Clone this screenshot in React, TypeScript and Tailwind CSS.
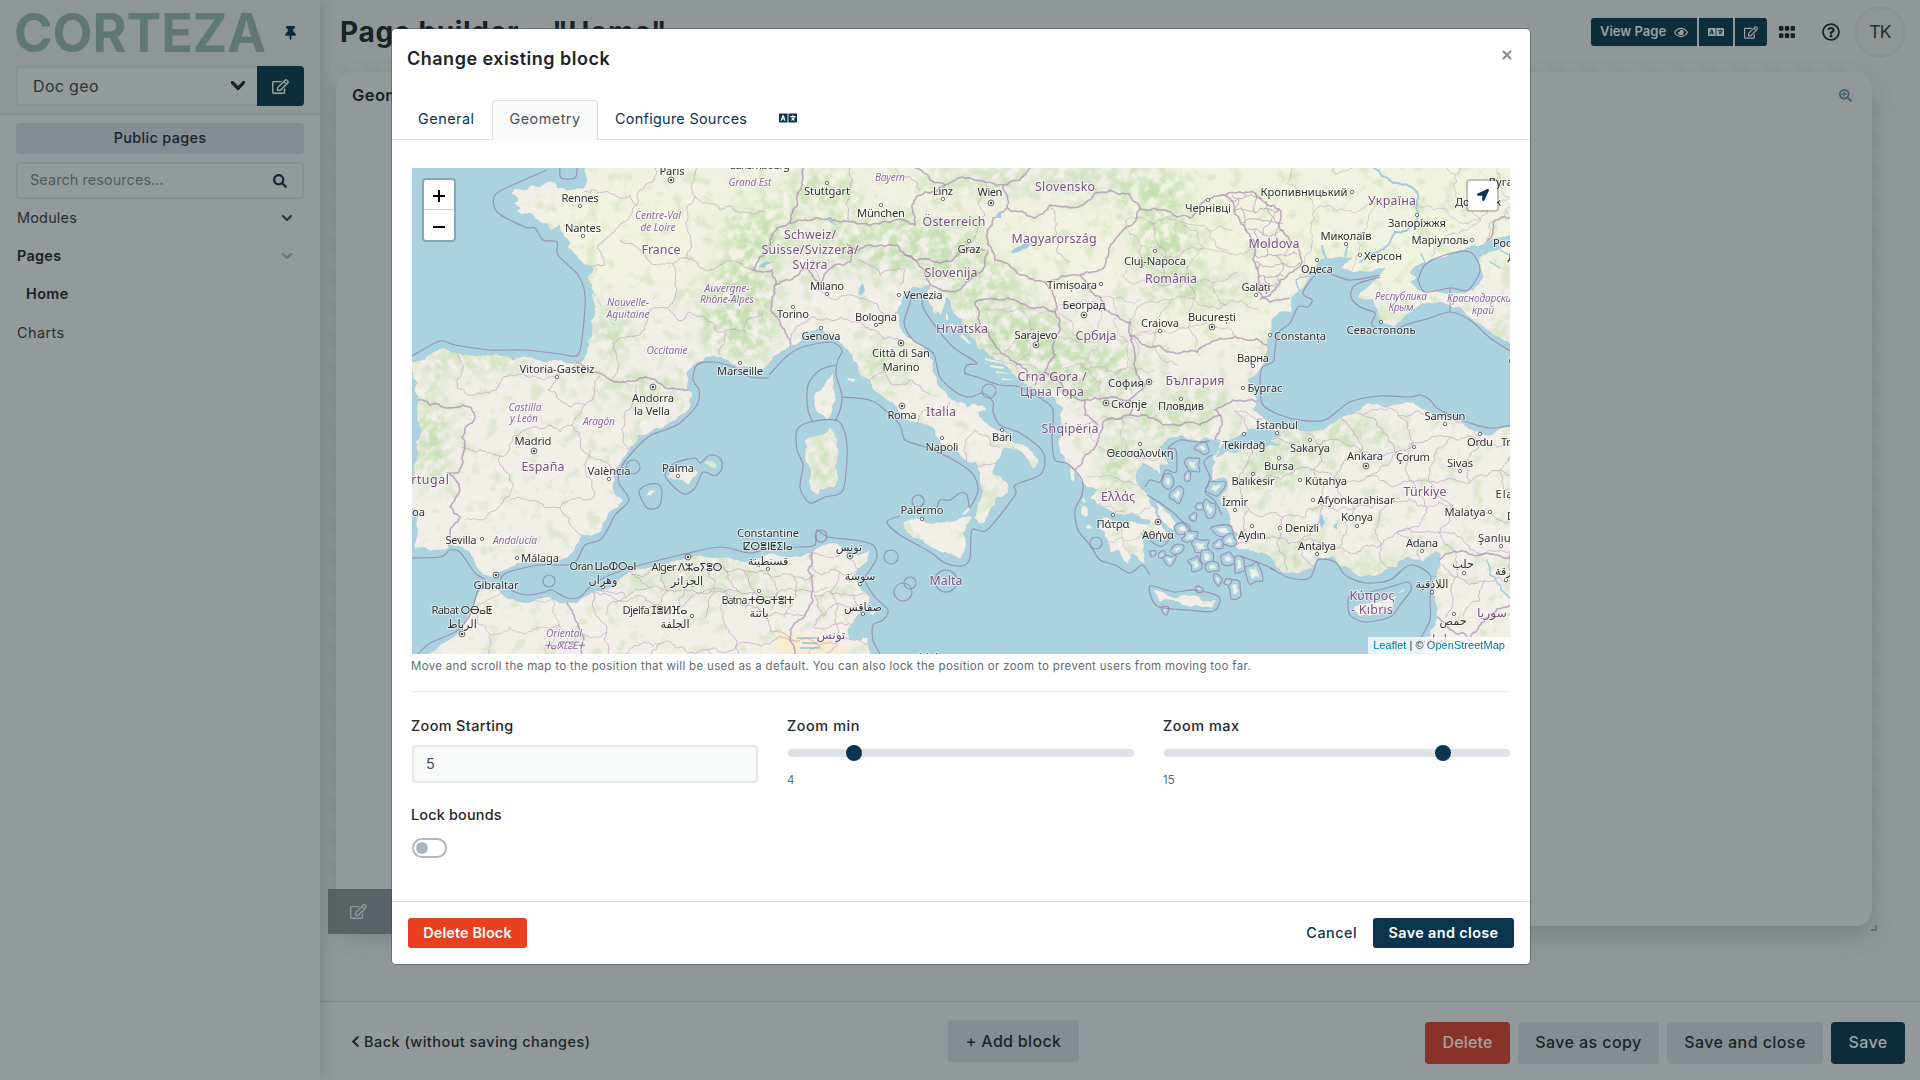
import {
  FaChevronDown,
  FaChevronLeft,
  FaLanguage,
  FaLocationArrow,
  FaRegEdit,
  FaRegEye,
  FaRegQuestionCircle,
  FaSearch,
  FaSearchPlus,
  FaThumbtack,
} from "react-icons/fa";

type Pt = [number, number];

/* ---------- geometry helpers ---------- */

function makeRng(seed: number) {
  let s = seed;
  return () => {
    s = (s * 1664525 + 1013904223) % 4294967296;
    return s / 4294967296;
  };
}

function parse(points: string): Pt[] {
  return points
    .trim()
    .split(/\s+/)
    .map((p) => p.split(",").map(Number) as unknown as Pt);
}

/** Adds midpoint displacement to a polyline so it reads as a natural coast or border. */
function rough(points: string, closed = false, amp = 0.16, seed = 7): string {
  const rng = makeRng(seed);
  const src = parse(points);
  if (closed) src.push(src[0]);
  const out: Pt[] = [src[0]];
  const split = (a: Pt, b: Pt) => {
    const dx = b[0] - a[0];
    const dy = b[1] - a[1];
    const len = Math.hypot(dx, dy);
    if (len < 2.6 || len > 75) {
      out.push(b);
      return;
    }
    const k = (rng() - 0.5) * 2 * amp;
    const m: Pt = [(a[0] + b[0]) / 2 - dy * k, (a[1] + b[1]) / 2 + dx * k];
    split(a, m);
    split(m, b);
  };
  for (let i = 1; i < src.length; i++) split(src[i - 1], src[i]);
  return "M" + out.map((p) => `${p[0].toFixed(1)},${p[1].toFixed(1)}`).join("L") + (closed ? "Z" : "");
}

/** Smooth line through the points, used for maritime limits. */
function smooth(points: string, closed = false): string {
  const p = parse(points);
  const n = p.length;
  const at = (i: number) => (closed ? p[(i + n) % n] : p[Math.max(0, Math.min(n - 1, i))]);
  let d = `M${p[0][0]},${p[0][1]}`;
  const last = closed ? n : n - 1;
  for (let i = 0; i < last; i++) {
    const a = at(i - 1);
    const b = at(i);
    const c = at(i + 1);
    const e = at(i + 2);
    d += `C${(b[0] + (c[0] - a[0]) / 7).toFixed(1)},${(b[1] + (c[1] - a[1]) / 7).toFixed(1)} ${(c[0] - (e[0] - b[0]) / 7).toFixed(1)},${(c[1] - (e[1] - b[1]) / 7).toFixed(1)} ${c[0]},${c[1]}`;
  }
  return d + (closed ? "Z" : "");
}

/** Irregular province mesh inside a box. */
function mesh(x0: number, y0: number, x1: number, y1: number, cell: number, seed: number): string {
  const rng = makeRng(seed);
  const cols = Math.ceil((x1 - x0) / cell);
  const rows = Math.ceil((y1 - y0) / cell);
  const g: Pt[][] = [];
  for (let r = 0; r <= rows; r++) {
    g.push([]);
    for (let c = 0; c <= cols; c++) {
      g[r].push([
        x0 + c * cell + (r % 2) * cell * 0.5 + (rng() - 0.5) * cell * 0.6,
        y0 + r * cell + (rng() - 0.5) * cell * 0.6,
      ]);
    }
  }
  let d = "";
  const seg = (a: Pt, b: Pt) => {
    d += rough(`${a[0]},${a[1]} ${b[0]},${b[1]}`, false, 0.22, Math.floor(rng() * 9999));
  };
  for (let r = 0; r < rows; r++) {
    for (let c = 0; c < cols; c++) {
      seg(g[r][c], g[r][c + 1]);
      if (rng() > 0.25) seg(g[r][c], g[r + 1][c]);
    }
  }
  return d;
}

function ring(x: number, y: number, rx: number, ry: number, seed: number, amp = 0.3): string {
  const rng = makeRng(seed);
  const pts: string[] = [];
  for (let i = 0; i < 9; i++) {
    const a = (i / 9) * Math.PI * 2;
    const k = 1 + (rng() - 0.5) * 2 * amp;
    pts.push(`${(x + Math.cos(a) * rx * k).toFixed(1)},${(y + Math.sin(a) * ry * k).toFixed(1)}`);
  }
  return smooth(pts.join(" "), true);
}

/* ---------- map data ---------- */

const europe =
  "582,160 584,188 570,190 557,188 554,182 547,182 543,185 533,185 526,190 515,188 510,193 518,200 512,203 520,208 516,212 522,215 533,215 540,222 547,223 552,230 560,225 563,233 570,242 568,247 572,250 580,260 593,268 588,276 592,285 602,307 597,296 592,293 591,320 587,350 583,360 577,362 570,363 557,360 543,362 530,357 513,360 490,355 470,355 457,353 448,350 443,348 433,352 425,360 413,362 405,366 405,370 413,373 417,383 415,393 417,410 421,430 418,453 413,477 405,492 408,505 417,510 417,533 414,548 423,547 437,550 450,546 460,547 468,551 472,557 475,565 483,575 493,578 500,572 517,563 533,563 553,562 567,558 572,553 580,538 592,536 600,533 603,523 612,510 623,500 613,488 613,473 622,460 630,447 637,442 638,435 653,430 667,425 678,417 690,407 692,393 687,388 687,372 697,363 707,357 713,356 727,360 733,365 750,367 760,370 769,363 780,353 790,347 802,340 807,332 820,328 837,338 848,350 853,360 858,373 870,380 873,390 887,400 903,417 917,423 927,425 935,430 940,443 953,450 967,462 975,462 980,473 983,490 977,507 974,518 978,523 985,522 992,507 997,497 1008,493 1007,482 1000,476 993,473 995,466 997,460 1005,448 1017,450 1028,460 1035,469 1039,460 1033,452 1017,443 1002,430 983,420 978,412 987,410 983,405 967,407 953,400 937,383 933,360 920,343 907,337 900,327 898,310 903,297 913,287 930,285 928,300 935,315 940,310 947,297 957,317 970,337 990,357 1010,370 1030,387 1053,397 1063,408 1060,413 1058,443 1060,453 1073,470 1080,480 1097,490 1090,497 1098,507 1113,513 1140,517 1140,521 1103,517 1098,527 1107,540 1110,553 1118,550 1128,565 1132,553 1138,560 1145,563 1143,550 1140,533 1153,537 1167,540 1165,530 1157,517 1150,503 1140,487 1137,473 1143,463 1152,468 1160,475 1160,465 1172,468 1167,460 1160,447 1173,437 1190,440 1207,438 1220,440 1212,457 1215,462 1212,480 1227,480 1220,497 1227,510 1230,523 1237,533 1237,550 1257,553 1273,560 1283,573 1300,573 1312,567 1317,557 1333,557 1347,567 1360,577 1380,575 1397,567 1407,557 1423,562 1440,553 1437,570 1432,583 1435,597 1437,617 1430,630 1420,660 1520,660 1520,160";

const africa =
  "405,665 427,654 443,643 462,630 472,610 480,590 497,587 507,598 530,602 550,597 560,603 577,603 593,592 613,587 627,573 650,567 677,560 700,555 727,557 747,562 770,553 790,557 810,553 823,545 837,543 847,553 858,555 870,550 868,560 858,570 853,577 860,587 870,597 867,607 853,623 848,630 850,640 867,640 873,665";

const islands = [
  "832,373 833,387 832,413 827,420 818,413 814,402 815,393 823,387",
  "805,440 820,435 830,427 838,440 838,457 835,487 820,490 818,495 810,490 810,470 805,453",
  "903,523 917,518 937,522 957,520 972,517 963,533 965,550 960,559 943,553 923,540 907,533",
  "1152,590 1173,597 1193,595 1217,600 1212,608 1190,607 1160,602",
  "1353,607 1367,603 1387,598 1405,588 1393,602 1392,610 1373,615 1360,617",
  "667,477 675,470 683,466 698,473 690,485 682,480",
  "704,462 710,461 717,466 714,469",
  "646,496 650,490 655,491 651,496",
  "1152,500 1165,510 1180,528 1172,530 1160,518",
];

const archipelago: [number, number, number, number][] = [
  [1192, 465, 6, 6], [1202, 447, 5, 4], [1215, 488, 9, 6], [1210, 510, 5, 8], [1177, 495, 5, 5],
  [1168, 482, 5, 5], [1187, 477, 2, 3], [1200, 507, 2, 2], [1193, 517, 2, 2], [1182, 529, 8, 4],
  [1190, 537, 6, 4], [1223, 530, 9, 4], [1200, 546, 7, 5], [1178, 549, 5, 4], [1170, 560, 4, 3],
  [1153, 553, 1.5, 1.5], [1162, 555, 1.5, 1.5], [1207, 557, 6, 4], [1196, 564, 5, 5], [1213, 567, 5, 3],
  [1228, 558, 6, 4], [1239, 564, 4, 6], [1255, 572, 6, 9], [1235, 588, 4, 7], [1218, 580, 3, 4],
  [1228, 582, 2, 2], [1200, 590, 2, 2], [1165, 610, 2, 3], [1230, 541, 6, 4], [1218, 545, 4, 3],
];

/* Ionian islands: no maritime ring of their own */
const ionian: [number, number, number, number][] = [
  [1085, 512, 4, 6], [1089, 527, 4, 3], [1072, 474, 3, 7], [1084, 500, 2, 3],
];

const blackSea =
  "1277,427 1263,417 1253,410 1257,403 1253,387 1248,380 1257,373 1265,360 1268,340 1272,320 1280,312 1292,313 1292,297 1307,283 1317,263 1325,258 1340,257 1352,258 1345,263 1340,268 1367,272 1385,268 1375,280 1360,292 1357,297 1373,300 1380,323 1393,327 1413,310 1440,302 1455,308 1460,307 1473,320 1487,330 1520,345 1520,425 1510,427 1490,435 1473,430 1460,420 1440,417 1427,410 1413,402 1387,407 1367,403 1353,413 1337,420 1323,430 1300,430";
const azov =
  "1417,277 1410,272 1423,263 1440,258 1457,252 1475,246 1487,242 1520,228 1520,245 1497,250 1480,257 1483,277 1473,290 1457,293 1440,292 1423,292 1410,282";
const marmara = "1222,446 1235,438 1243,433 1258,428 1275,432 1281,436 1270,440 1280,445 1262,447 1250,445 1238,452 1228,450 1216,457";

const lakes = [
  "1010,252 1020,246 1035,240 1028,247 1014,253",
  "824,217 832,221 838,225 833,224",
  "858,294 862,283 865,290 861,295",
  "758,267 766,261 772,262 764,268",
  "1318,522 1322,514 1325,522 1321,528",
  "1333,527 1338,522 1337,530",
  "996,217 1000,211 1001,218",
];

const borders = [
  "577,362 590,372 610,380 633,381 650,378 665,388 690,390",
  "405,407 423,400 430,405 447,408 463,405 470,407 475,417 472,423 462,437 462,457 458,473 448,473 460,490 450,507 460,517 450,533 449,546",
  "803,168 800,190 790,223 777,228 770,245 753,270 772,270 775,293 772,313 790,340 790,353",
  "790,223 810,220 830,218 850,222 870,225 895,220 915,225 912,205 925,192 945,185 958,178 985,182 1003,185 1007,208 993,218 988,245",
  "775,285 790,280 805,268 820,285 835,265 850,262 848,245 858,250 880,245 897,245 905,255 930,260 955,257 985,250",
  "1007,208 1035,218 1050,205 1090,200 1110,190 1130,195 1140,208 1165,210 1190,218 1200,205 1225,195",
  "1003,185 1020,180 1030,168",
  "915,168 930,180 945,185",
  "1140,208 1115,240 1105,265 1080,275 1045,282 1020,275 995,260 988,245",
  "905,255 925,270 930,285 955,292 970,280 985,262 988,250",
  "975,302 1000,300 1030,308 1055,312 1060,330 1055,355 1045,372 1035,385",
  "975,302 980,325 1010,360 1030,378",
  "1045,282 1055,300 1055,312",
  "1080,275 1090,290 1105,310 1130,322 1130,335 1145,345 1197,352 1220,338 1240,338 1270,348",
  "1130,335 1135,360 1145,385 1130,400 1130,415 1160,422 1200,425 1220,415 1215,410 1240,400 1258,402",
  "1130,415 1105,420 1098,440 1085,455 1075,470",
  "1045,372 1062,385 1085,400 1085,415 1098,425",
  "1085,400 1105,398 1130,400",
  "1220,415 1222,425 1215,440",
  "1225,195 1240,220 1255,250 1258,292 1270,302 1290,298",
  "1225,195 1255,193 1280,210 1285,235 1302,262 1280,280 1275,290 1260,300",
  "1520,213 1495,220 1487,242",
  "1437,562 1450,553 1480,555 1520,558",
  "1437,617 1450,630 1470,640 1520,600",
  "567,602 575,620 582,654",
  "813,548 808,570 808,610 790,630 795,654",
];

const provinces = [
  "584,192 605,192 630,195 637,205 623,222 605,240 598,245 605,265 590,266",
  "620,240 640,250 650,262 673,264 687,258 690,235 688,205 695,196 720,210 745,212 765,212",
  "637,205 640,190 652,182 655,168",
  "695,196 697,168",
  "687,258 705,270 712,270 725,262 745,268 753,268",
  "673,264 675,285 668,308 650,310 640,335 613,343 617,360 612,378",
  "668,310 678,320 690,312 705,318 715,330 725,332 720,355",
  "725,330 745,332 750,318 765,310",
  "457,353 462,370 457,388 475,395 500,383 540,378 560,372 577,362",
  "560,372 548,390 560,400 585,405 600,375",
  "585,405 575,418 572,425 580,445 600,460 612,470",
  "637,385 632,405 625,420 622,430 628,450",
  "462,447 475,452 500,456 500,465 510,475 510,495 490,512 465,520",
  "500,456 530,428 548,425 560,432 572,425",
  "510,500 545,508 560,508 575,530 583,535",
  "560,508 570,500 590,500 592,482 585,470 590,450",
  "812,260 818,290 835,300 860,298 880,312 898,312",
  "790,340 800,325 830,320 870,330 900,340",
  "858,260 880,275 905,270 900,285",
  "870,380 885,372 895,385 910,380 930,395",
  "917,423 925,410 940,412 950,402",
  "967,462 965,440 975,430 985,435 1000,448",
  "977,467 990,465 997,462",
  "850,168 850,195 848,222",
  "895,168 920,190",
  "985,182 978,205 985,215 975,240 955,257",
  "1050,205 1055,230 1070,262",
];

const maritime = [
  "547,170 515,184 495,195 497,212 525,227 535,228 543,240 557,242 558,255 578,275 585,295 583,330 578,355 560,354 525,350 490,350 455,345 440,341 412,356",
  "560,168 561,178 575,178 577,168",
  "769,378 750,377 733,367 713,362 697,365 693,380 699,390 697,405 680,423 665,430 648,437 630,455 620,470 619,483 629,500 615,515 609,527 600,540 585,545 577,560 567,565 540,565 515,570 503,575 502,582 515,592 530,595 545,592 552,590 567,598 580,597 592,585 610,575 640,565 680,555 720,547 750,553 770,548 800,547 815,545 817,530 828,537 855,540 873,545 877,557 870,570 865,580 875,597 888,610 883,620 873,625 873,640 880,654",
  "405,558 440,557 450,550 460,552 475,573 485,580 478,590 470,615 455,632 430,643 418,654",
  "769,375 785,358 800,348 830,342 842,350 838,360 836,375 842,395 840,410 835,421",
  "836,365 820,370 808,385 808,410 813,422",
  "842,397 870,400 885,410 900,425 905,440 925,447 950,458 972,473 978,490 970,507 967,495 960,493 950,500 940,500 937,508",
  "900,516 887,522 900,535 930,552 945,563 962,566 970,558 972,530 987,530 1015,495 1015,485 1040,475 1045,460 1040,448 1020,433 1000,425 993,412 993,402 983,393 970,397 957,393 940,377 933,353 913,340 904,323 910,303 910,290",
  "922,292 923,307 933,323 953,347 977,363 967,365 965,373 977,377 1000,385 1020,387 1043,400 1053,410 1052,440 1055,460 1068,464 1082,480 1082,495 1075,510 1078,530 1090,545 1100,560 1115,565 1130,573 1142,565 1150,575",
  "1380,275 1350,280 1320,272 1303,293 1312,300 1308,307 1298,307 1290,323 1278,333 1275,350 1273,362 1262,368 1260,390 1263,405 1280,415 1300,420 1325,420 1350,402 1380,396 1410,397 1420,395 1430,400 1437,408 1450,415 1470,423 1490,428 1512,425",
  "1380,277 1355,285 1351,297 1360,307 1375,313 1372,325 1390,332 1405,325 1430,318 1450,312 1470,320 1490,338 1512,352",
  "1418,280 1425,265 1445,255 1470,252 1480,270 1468,290 1450,288 1425,292 1418,280",
  "1450,288 1450,312",
  "1270,568 1290,578 1310,578 1318,560 1335,562 1345,575 1365,583 1390,580 1410,565 1430,575 1430,600 1430,620 1420,640 1418,654",
  "1145,487 1150,480 1160,482 1166,470 1176,472 1176,450 1168,448 1180,440 1196,442 1210,441",
  "1212,455 1204,462 1210,478 1205,492 1214,500 1222,515",
  "1147,495 1160,503 1176,515 1190,530",
  "1240,556 1262,564 1275,570",
  "1143,530 1152,542 1163,546 1172,535",
];
const maritimeRings = [
  "665,475 675,463 695,458 700,463 710,455 720,458 722,468 715,476 703,472 695,488 685,494 675,488",
  "797,430 810,422 838,421 847,445 843,490 825,497 810,503 800,488 803,465 797,450",
  "1348,600 1350,615 1365,622 1390,617 1400,605 1411,590 1408,582 1390,587 1370,592 1352,595",
  "1150,586 1174,592 1195,590 1219,597 1214,611 1188,610 1157,606",
  "639,492 647,485 658,484 662,492 660,505 654,509 646,507",
];
const maritimeCircles: [number, number, number][] = [
  [633, 467, 7], [549, 581, 6], [989, 391, 7], [918, 501, 6], [891, 557, 7],
  [910, 583, 6], [903, 592, 9], [1096, 543, 6], [946, 581, 11], [821, 536, 6],
];

/* [text, centre x, baseline, width (0 = natural)] */
type Label = [string, number, number, number];

const cities: Label[] = [
  ["Paris", 672, 174.5, 25], ["Rennes", 580, 202, 37], ["Nantes", 583, 232, 36], ["Vitoria-Gasteiz", 557, 373, 75],
  ["Marseille", 740, 375, 46], ["Andorra", 653, 402, 42], ["la Vella", 652, 415, 36], ["Madrid", 533, 445, 37],
  ["València", 609, 475, 43], ["Lisboa", 408, 516, 34], ["Sevilla", 461, 544, 31], ["Málaga", 540, 562, 38],
  ["Gibraltar", 496, 589, 45], ["Palma", 678, 472, 32], ["Oran ⵡⴰⵀⵔⴰⵏ", 603, 570, 67], ["وهران", 603, 584, 0],
  ["Alger ⴷⵣⴰⵢⴻⵔ", 687, 571, 71], ["الجزائر", 687, 585, 0], ["Rabat ⵔⴱⴰⵟ", 462, 614, 61], ["الرباط", 462, 628, 0],
  ["Djelfa ⵊⴻⵍⴼⴰ", 655, 614, 65], ["الجلفة", 675, 628, 0], ["Constantine", 768, 537, 62], ["ⵇⵙⴻⵏⵟⵉⵏⴰ", 768, 550, 50],
  ["قسنطينة", 768, 565, 0], ["Batna ⵜⴱⴰⵜⴻⵏⵜ", 758, 604, 73], ["باتنة", 759, 617, 0], ["Stuttgart", 827, 195, 46],
  ["Linz", 943, 195, 20], ["Wien", 990, 196, 25], ["München", 881, 217, 48], ["Graz", 969, 253, 23],
  ["Cluj-Napoca", 1155, 265, 62], ["Milano", 827, 290, 34], ["Timișoara", 1072, 289, 50], ["Venezia", 923, 299, 39],
  ["Београд", 1084, 309, 43], ["Torino", 793, 318, 32], ["Bologna", 876, 321, 42], ["Genova", 821, 340, 39],
  ["Sarajevo", 1036, 339, 43], ["Città di San", 901, 357, 58], ["Marino", 901, 371, 37], ["София", 1126, 387, 36],
  ["Скопје", 1129, 408, 36], ["Roma", 902, 419, 29], ["Bari", 1002, 441, 20], ["Napoli", 942, 451, 33],
  ["Θεσσαλονίκη", 1140, 457, 67], ["Πάτρα", 1113, 528, 33], ["Palermo", 922, 514, 43], ["تونس", 849, 551, 0],
  ["سوسة", 860, 580, 0], ["صفاقس", 863, 611, 0], ["طرابلس", 924, 662, 0], ["Кропивницький", 1304, 196, 87],
  ["Чернівці", 1208, 212, 46], ["Донецьк", 1478, 206, 46], ["Луганськ", 1513, 186, 50], ["Запоріжжя", 1417, 227, 58],
  ["Миколаїв", 1346, 240, 51], ["Маріуполь", 1440, 244, 57], ["Херсон", 1383, 260, 38], ["Ростов-на-", 1521, 247, 56],
  ["Дону", 1521, 261, 27], ["Одеса", 1317, 273, 32], ["Galați", 1256, 291, 29], ["București", 1212, 321, 48],
  ["Craiova", 1160, 327, 38], ["Севастополь", 1381, 334, 69], ["Constanța", 1300, 340, 52], ["Варна", 1253, 362, 32],
  ["Сочи", 1522, 365, 27], ["Бургас", 1265, 392, 35], ["Пловдив", 1181, 410, 46], ["Samsun", 1445, 420, 41],
  ["İstanbul", 1277, 429, 42], ["Tekirdağ", 1244, 449, 43], ["Sakarya", 1310, 452, 40], ["Ankara", 1365, 460, 36],
  ["Çorum", 1413, 461, 34], ["Ordu", 1480, 446, 26], ["Trabzon", 1521, 446, 40], ["Sivas", 1460, 467, 26],
  ["Bursa", 1279, 470, 30], ["Balıkesir", 1253, 485, 43], ["Kütahya", 1326, 485, 42], ["İzmir", 1235, 506, 26],
  ["Afyonkarahisar", 1356, 504, 77], ["Elazığ", 1513, 498, 35], ["Konya", 1357, 521, 32], ["Malatya", 1465, 516, 41],
  ["Diyarbakır", 1534, 520, 54], ["Aydın", 1252, 539, 28], ["Denizli", 1302, 532, 34], ["Antalya", 1317, 550, 38],
  ["Adana", 1422, 547, 32], ["Şanlıurfa", 1502, 542, 48], ["Αθήνα", 1158, 539, 32], ["حلب", 1463, 568, 0],
  ["اللاذقية", 1432, 588, 0], ["الرقة", 1507, 575, 0], ["حمص", 1453, 625, 0], ["Luxembourg", 760, 169, 60],
];

const countries: Label[] = [
  ["France", 661, 253.5, 39], ["España", 543, 471, 43], ["Portugal", 422, 484, 54], ["Slovensko", 1065, 191, 60],
  ["Österreich", 954, 226, 63], ["Schweiz/", 810, 239, 52], ["Suisse/Svizzera/", 810, 254, 97], ["Svizra", 810, 269, 35],
  ["Magyarország", 1054, 243, 85], ["Slovenija", 951, 277, 53], ["Hrvatska", 962, 333, 52], ["Србија", 1096, 340, 41],
  ["Crna Gora /", 1052, 381, 69], ["Црна Гора", 1052, 396, 64], ["Italia", 941, 416, 30], ["Shqipëria", 1070, 433, 57],
  ["Ελλάς", 1118, 501, 34], ["Malta", 946, 585, 33], ["تونس", 831, 639, 0], ["Україна", 1392, 205, 48],
  ["Moldova", 1274, 248, 51], ["România", 1171, 283, 52], ["България", 1195, 385, 59], ["Türkiye", 1425, 496, 43],
  ["Κύπρος", 1372, 600, 45], ["- Kıbrıs", 1372, 614, 42], ["سوريا", 1492, 617, 0], ["لبنان", 1435, 643, 0],
];

const regions: Label[] = [
  ["Grand Est", 750, 186, 43], ["Centre-Val", 658, 219, 46], ["de Loire", 658, 231, 35], ["Auvergne-", 727, 292, 45],
  ["Rhône-Alpes", 727, 303, 54], ["Nouvelle-", 628, 306, 42], ["Aquitaine", 628, 318, 43], ["Occitanie", 667, 354, 41],
  ["Castilla", 525, 411, 33], ["y León", 524, 422, 28], ["Aragón", 599, 425, 32], ["Andalucía", 515, 544, 44],
  ["Oriental", 564, 637, 36], ["ⵜⴰⵏⴳⵎⵓⴹⵜ", 564, 649, 41], ["Bayern", 890, 181, 30], ["Республика", 1401, 300, 52],
  ["Крым", 1401, 311, 25], ["Краснодарский", 1482, 302, 70], ["край", 1483, 314, 22],
];

const towns: Pt[] = [
  [580, 206], [583, 236], [557, 377], [740, 363], [609, 479], [482, 539], [517, 558], [678, 476], [603, 587],
  [692, 616], [768, 569], [759, 591], [827, 183], [943, 199], [881, 205], [969, 241], [1155, 251], [827, 294],
  [1101, 284], [899, 295], [793, 307], [876, 325], [821, 328], [1002, 430], [942, 438], [1140, 444], [1113, 515],
  [922, 519], [860, 584], [863, 614], [1352, 192], [1208, 200], [1417, 215], [1346, 244], [1472, 240], [1360, 255],
  [1317, 260], [1256, 295], [1160, 331], [1381, 322], [1270, 335], [1253, 366], [1243, 388], [1181, 399],
  [1445, 424], [1277, 433], [1244, 434], [1310, 440], [1414, 447], [1480, 434], [1460, 471], [1279, 458],
  [1253, 474], [1300, 480], [1235, 510], [1313, 500], [1357, 526], [1490, 512], [1252, 526], [1280, 528],
  [1317, 554], [1422, 551], [1501, 546], [1464, 573], [1432, 592], [1506, 580], [1454, 614],
];

const capitals: Pt[] = [
  [671, 180], [653, 387], [534, 451], [496, 575], [688, 557], [462, 634], [991, 203], [1084, 315], [1036, 345],
  [901, 343], [1149, 382], [1106, 403], [902, 406], [850, 556], [1212, 327], [1366, 466], [1158, 522],
];

/* Blurred patches of woodland: cx, cy, rx, ry */
const woods: [number, number, number, number][] = [
  [900, 245, 90, 28], [1010, 335, 60, 28], [1085, 370, 60, 30], [1165, 240, 30, 50], [1200, 290, 45, 16],
  [740, 310, 40, 55], [610, 335, 20, 25], [640, 388, 50, 12], [470, 360, 70, 12], [880, 365, 28, 18],
  [825, 460, 14, 34], [1330, 435, 70, 14], [1290, 555, 40, 12], [1370, 570, 40, 10], [980, 285, 50, 20],
  [1085, 180, 50, 14], [760, 235, 40, 30], [1120, 470, 20, 30], [1160, 425, 60, 12], [820, 190, 40, 20],
  [430, 440, 20, 50], [700, 582, 90, 10], [1190, 400, 50, 10], [1270, 470, 40, 20],
  [990, 500, 10, 20], [1370, 318, 40, 8], [1500, 335, 25, 10], [975, 180, 60, 12], [1150, 190, 40, 20],
];

function MapLabels({ items, kind }: { items: Label[]; kind: "city" | "country" | "region" }) {
  const cls =
    kind === "city"
      ? "fill-[#303030] text-[11.2px]"
      : kind === "country"
        ? "fill-[#77507f] text-[12.4px]"
        : "fill-[#8d6a9c] text-[10.2px] italic";
  return (
    <g
      className={cls}
      fontFamily='"Noto Sans", "DejaVu Sans", sans-serif'
      textAnchor="middle"
      stroke="#ffffff"
      strokeOpacity={0.6}
      strokeWidth={2}
      strokeLinejoin="round"
      paintOrder="stroke"
    >
      {items.map(([t, x, y, w], i) => (
        <text key={i} x={x} y={y} textLength={w > 0 ? w : undefined}>
          {t}
        </text>
      ))}
    </g>
  );
}

function GeoMap() {
  const landPaths = [
    rough(europe, true, 0.17, 11),
    rough(africa, true, 0.08, 5),
    ...islands.map((p, i) => rough(p, true, 0.15, 31 + i)),
  ];
  return (
    <svg viewBox="412 168 1098 486" className="block h-[486px] w-[1098px] bg-[#aad3df]">
      <defs>
        <clipPath id="land">
          {landPaths.map((d, i) => (
            <path key={i} d={d} />
          ))}
        </clipPath>
        <filter id="scrub" x="0" y="0" width="100%" height="100%" colorInterpolationFilters="sRGB">
          <feTurbulence type="fractalNoise" baseFrequency="0.07" numOctaves={5} seed={4} />
          <feColorMatrix values="0 0 0 0 0.80  0 0 0 0 0.88  0 0 0 0 0.71  5 0 0 0 -2.75" />
        </filter>
        <filter id="forest" x="0" y="0" width="100%" height="100%" colorInterpolationFilters="sRGB">
          <feTurbulence type="fractalNoise" baseFrequency="0.1" numOctaves={4} seed={9} />
          <feColorMatrix values="0 0 0 0 0.74  0 0 0 0 0.86  0 0 0 0 0.66  3.4 0 0 0 -1.15" />
        </filter>
        <filter id="soft">
          <feGaussianBlur stdDeviation="12" />
        </filter>
        <mask id="woods">
          <g filter="url(#soft)" fill="#ffffff">
            {woods.map(([cx, cy, rx, ry], i) => (
              <ellipse key={i} cx={cx} cy={cy} rx={rx} ry={ry} />
            ))}
          </g>
        </mask>
        <clipPath id="moldova">
          <path d="M1225,195L1255,193L1280,210L1285,235L1302,262L1280,280L1275,290L1258,292L1255,250L1240,220Z" />
        </clipPath>
      </defs>

      {landPaths.map((d, i) => (
        <path key={i} d={d} fill="#f2efe9" stroke="#a9bfd0" strokeWidth={0.5} />
      ))}

      <g clipPath="url(#land)">
        <g filter="url(#soft)" fill="#f1f3df">
          <ellipse cx={1350} cy={210} rx={230} ry={80} opacity={0.9} />
          <ellipse cx={1060} cy={245} rx={90} ry={50} opacity={0.8} />
          <ellipse cx={660} cy={230} rx={120} ry={70} opacity={0.8} />
          <ellipse cx={1210} cy={320} rx={80} ry={30} opacity={0.8} />
          <ellipse cx={860} cy={200} rx={140} ry={40} opacity={0.6} />
        </g>
        <rect x={412} y={168} width={1098} height={486} filter="url(#scrub)" opacity={0.5} />
        <g mask="url(#woods)">
          <rect x={412} y={168} width={1098} height={486} filter="url(#forest)" opacity={0.8} />
        </g>
        <path d="M775,632L800,634L838,642L850,654L775,654Z" fill="#f8ecd0" />
        <path d="M797,638h20M802,643h16M800,648h20" stroke="#8fc6de" strokeWidth={1.4} />
        <g fill="none" stroke="#b292b8" strokeOpacity={0.7} strokeWidth={0.8}>
          {provinces.map((p, i) => (
            <path key={i} d={rough(p, false, 0.2, 50 + i)} />
          ))}
          <path d={mesh(1240, 410, 1520, 590, 33, 3)} />
          <path d={mesh(1130, 225, 1235, 335, 27, 21)} opacity={0.8} />
          <path d={mesh(1290, 160, 1520, 245, 52, 8)} opacity={0.8} />
          <path d={mesh(590, 570, 790, 600, 22, 15)} />
          <path d={mesh(600, 605, 790, 680, 42, 19)} />
          <path d={mesh(812, 552, 870, 650, 19, 6)} />
          <path d={mesh(1090, 425, 1140, 560, 28, 13)} opacity={0.7} />
          <path d={mesh(480, 600, 570, 660, 34, 17)} opacity={0.8} />
          <path d={mesh(990, 305, 1125, 400, 32, 27)} opacity={0.7} />
        </g>
        <g fill="none" stroke="#b292b8" strokeOpacity={0.8} strokeWidth={0.9} clipPath="url(#moldova)">
          <path d={mesh(1220, 188, 1310, 300, 11, 2)} />
        </g>
        <g fill="none" stroke="#a98bb0" strokeOpacity={0.7} strokeWidth={1.6}>
          {borders.map((p, i) => (
            <path key={i} d={rough(p, false, 0.16, 90 + i)} />
          ))}
        </g>
        <g fill="none" stroke="#9fcbe0" strokeLinecap="round">
          <path d={rough("1363,162 1382,176 1405,184 1418,195 1417,222 1395,232 1388,245 1378,252 1360,262", false, 0.14, 3)} strokeWidth={2} />
          <path d={rough("1326,258 1322,246", false, 0.1, 3)} strokeWidth={2} />
          <path d={rough("1345,256 1348,246", false, 0.1, 3)} strokeWidth={1.6} />
          <path d={rough("1300,292 1296,280 1310,275", false, 0.1, 3)} strokeWidth={1.4} />
          <path d="M1500,250l14,8M1490,262l10,6M1425,262l-4,-8M1445,240l-5,6" strokeWidth={1.4} />
          <path d={rough("1487,560 1490,575 1500,585 1512,600", false, 0.2, 3)} strokeWidth={1.4} />
          <path d={rough("1098,507 1113,516 1130,518 1148,522", false, 0.08, 4)} stroke="#aad3df" strokeWidth={5} />
        </g>
      </g>

      <g fill="#aad3df" stroke="#a9bfd0" strokeWidth={0.5}>
        <path d={rough(blackSea, true, 0.1, 12)} />
        <path d={rough(azov, true, 0.14, 12)} />
        <path d={rough(marmara, true, 0.14, 12)} />
      </g>
      <path d="M1277,428L1280,436" stroke="#aad3df" strokeWidth={1.6} />
      {lakes.map((p, i) => (
        <path key={i} d={rough(p, true, 0.1, i + 3)} fill="#9fcbe0" />
      ))}

      {/* Dalmatian and Tyrrhenian islands */}
      <g fill="#eef0e0">
        <path d="M938,303l6,3l-3,9l-4,-4ZM946,312l3,7l-3,1ZM952,323l7,9l-2,1l-7,-8ZM962,334l9,9l-2,1l-9,-8ZM985,358l13,3l-1,2l-12,-3ZM990,365l14,2l-1,2l-13,-2ZM996,371l16,3l-16,-1ZM1002,378l14,2l-14,0Z" />
        <path d="M847,378l8,1l-1,3l-6,-2ZM962,514l6,-6l2,2l-6,5ZM868,614l8,-3l-3,4ZM862,638l6,0l-1,5l-5,-1Z" />
      </g>
      {ionian.map(([x, y, rx, ry], i) => (
        <path key={i} d={ring(x, y, rx * 0.8, ry * 0.8, 71 + i, 0.45)} fill="#eef0e4" />
      ))}

      <g fill="none" stroke="#9a8fb3" strokeWidth={1.1}>
        {archipelago.map(([x, y, rx, ry], i) => (
          <path key={i} d={ring(x, y, rx + 2, ry + 2, 40 + i, 0.32)} fill="#aad3df" />
        ))}
      </g>
      {archipelago.map(([x, y, rx, ry], i) => (
        <path key={i} d={ring(x, y, rx * 0.6, ry * 0.6, 40 + i, 0.55)} fill="#eef0e4" stroke="#c9e3ec" strokeWidth={0.8} />
      ))}

      <g fill="none" stroke="#9488ae" strokeOpacity={0.85} strokeWidth={1.2} strokeLinejoin="round">
        {maritime.map((p, i) => (
          <path key={i} d={smooth(p)} />
        ))}
        {maritimeRings.map((p, i) => (
          <path key={i} d={smooth(p, true)} />
        ))}
        {maritimeCircles.map(([x, y, r], i) => (
          <circle key={i} cx={x} cy={y} r={r} />
        ))}
      </g>

      <g fill="#ffffff" stroke="#555555" strokeWidth={0.8}>
        {towns.map(([x, y], i) => (
          <circle key={i} cx={x} cy={y} r={1.7} />
        ))}
      </g>
      {capitals.map(([x, y], i) => (
        <g key={i}>
          <circle cx={x} cy={y} r={2.9} fill="#ffffff" stroke="#444444" strokeWidth={0.8} />
          <circle cx={x} cy={y} r={1.3} fill="#444444" />
        </g>
      ))}

      <MapLabels items={regions} kind="region" />
      <MapLabels items={cities} kind="city" />
      <MapLabels items={countries} kind="country" />
    </svg>
  );
}

/* ---------- page chrome ---------- */

function GridIcon() {
  return (
    <svg viewBox="0 0 16 12" className="h-3 w-4" fill="#172022">
      {[0, 5.8, 11.6].map((x) =>
        [0, 7.2].map((y) => <rect key={`${x}-${y}`} x={x} y={y} width="4.4" height="4.8" rx="1" />),
      )}
    </svg>
  );
}

function Sidebar() {
  return (
    <aside className="relative z-10 flex w-80 shrink-0 flex-col bg-[#94999b] shadow-[4px_0_12px_rgba(60,70,72,0.2)]">
      <div className="h-[115px] border-b border-[#858b8e] bg-[#8e9697] px-4">
        <div className="flex h-[66px] items-start justify-between pt-[13px]">
          <svg viewBox="0 0 250 40" className="h-10 w-[250px] overflow-visible">
            <text
              x="-2"
              y="39"
              textLength="252"
              fontFamily="Inter, sans-serif"
              className="fill-[#5f7873] text-[53.5px] font-bold"
              lengthAdjust="spacingAndGlyphs"
            >
              CORTEZA
            </text>
          </svg>
          <FaThumbtack className="mt-[13px] mr-2 h-[14px] w-[11px] text-[#0d2c3b]" />
        </div>
        <div className="flex h-10">
          <div className="flex flex-1 items-center justify-between rounded-l border-2 border-r-0 border-[#899196] bg-[#94999b] pr-3 pl-[15px] text-[16px] tracking-[0.33px] text-[#2a3335]">
            <span className="pb-px">Doc geo</span>
            <svg viewBox="0 0 14 10" className="h-2.5 w-3.5" fill="none" stroke="#172022" strokeWidth="3.2">
              <path d="M1.2 1.4 7 7.4l5.8-6" strokeLinecap="round" />
            </svg>
          </div>
          <div className="flex w-[47px] items-center justify-center rounded-r bg-[#0e2d3b] text-[#9aa3a6]">
            <FaRegEdit className="h-[15px] w-[17px]" />
          </div>
        </div>
      </div>
      <div className="flex flex-col px-4 pt-2 text-[14.4px] text-[#252e30]">
        <div className="flex h-[31px] items-center justify-center rounded bg-[#858d92] pb-0.5 font-medium tracking-[0.35px] text-[#1a2325]">
          Public pages
        </div>
        <div className="mt-2 flex h-[37px] items-center justify-between rounded border-2 border-[#879095] pr-[15px] pl-3 text-[#505a5d]">
          <span className="pb-px tracking-[0.1px]">Search resources...</span>
          <FaSearch className="size-[14px] text-[#0e2d3b]" />
        </div>
        <div className="flex h-[38px] items-center justify-between pr-[11px] pl-px tracking-[0.23px]">
          Modules
          <FaChevronDown className="size-3 text-[#0e2d3b]" />
        </div>
        <div className="flex h-[38px] items-center justify-between pr-[11px] pl-px font-semibold tracking-[0.3px] text-[#171f21]">
          Pages
          <FaChevronDown className="size-3 text-[#6b7477]" />
        </div>
        <div className="flex h-[38px] items-center pl-2.5 font-semibold tracking-[0.4px] text-[#171f21]">Home</div>
        <div className="flex h-[39px] items-center pl-px tracking-[0.45px]">Charts</div>
      </div>
    </aside>
  );
}

function TopBar() {
  return (
    <header className="flex h-16 items-center pr-[15px] pl-5">
      <h1 className="flex-1 text-[28px] font-bold tracking-[0.67px] text-[#192224]">
        Page builder <span className="pr-1">–</span> "Home"
      </h1>
      <div className="flex h-7 gap-0.5 text-[#9aa3a6]">
        <div className="flex w-[106px] items-center gap-2 rounded-l-[3px] bg-[#0e2d3b] pl-[9px] text-[13px] font-semibold">
          View Page
          <FaRegEye className="h-[13px] w-[14px]" />
        </div>
        <div className="flex w-[34px] items-center justify-center bg-[#0e2d3b]">
          <FaLanguage className="size-4" />
        </div>
        <div className="flex w-8 items-center justify-center rounded-r-[3px] bg-[#0e2d3b]">
          <FaRegEdit className="h-[13px] w-[14px]" />
        </div>
      </div>
      <div className="ml-3">
        <GridIcon />
      </div>
      <FaRegQuestionCircle className="ml-[27px] size-[18px] text-[#172022]" />
      <div className="ml-[15px] flex size-[50px] items-center justify-center rounded-full border border-[#858c8c] bg-[#8f9695] text-[17.5px] tracking-[-0.8px] text-[#222b2d]">
        TK
      </div>
    </header>
  );
}

function Canvas() {
  return (
    <div className="relative ml-2 h-[870px] w-[1552px] rounded-xl bg-[repeating-linear-gradient(45deg,#909698_0,#909698_11px,#93999a_11px,#93999a_22px)] p-2">
      <div className="flex h-[854px] justify-between rounded-2xl bg-[#93999b] px-4 pt-[11px] shadow-[0_10px_22px_rgba(60,70,72,0.28)]">
        <h2 className="text-[16.5px] font-semibold tracking-[0.4px] text-[#192224]">Geometry</h2>
        <FaSearchPlus className="mt-[6px] mr-1 size-[13px] text-[#47606a]" />
      </div>
      <div className="absolute bottom-0 left-0 flex h-[45px] w-[70px] items-center bg-[#596365] pl-[22px] text-[#8f989a]">
        <FaRegEdit className="h-[15px] w-[17px]" />
      </div>
      <div className="absolute right-[3px] bottom-[3px] size-1.5 border-r-2 border-b-2 border-[#666d6f]" />
    </div>
  );
}

function BottomBar() {
  return (
    <footer className="flex h-[79px] items-center border-t border-[#81888b] bg-[#93999b] pr-[15px] pl-[31px] font-medium text-[#1b2426]">
      <div className="flex w-[597px] items-center gap-1 pt-0.5 text-[14.4px] tracking-[0.52px]">
        <FaChevronLeft className="h-[13px] w-[9px]" />
        Back (without saving changes)
      </div>
      <div className="flex h-[42px] w-[131px] items-center justify-center rounded bg-[#858d92] pb-px text-[16px] tracking-[0.31px]">
        + Add block
      </div>
      <div className="ml-auto flex gap-2 pt-[3px] text-[16px] tracking-[0.42px]">
        <div className="flex h-[42px] w-[85px] items-center justify-center rounded bg-[#883229] pb-px tracking-[0.17px] text-[#a3a3a2]">
          Delete
        </div>
        <div className="flex h-[42px] w-[141px] items-center justify-center rounded bg-[#858d92] pb-px">Save as copy</div>
        <div className="flex h-[42px] w-[156px] items-center justify-center rounded bg-[#858d92] pb-px">Save and close</div>
        <div className="flex h-[42px] w-[74px] items-center justify-center rounded bg-[#0e2d3b] pb-px text-[#9fa6a8]">Save</div>
      </div>
    </footer>
  );
}

/* ---------- modal ---------- */

function Slider({ label, value, percent, tracking }: { label: string; value: string; percent: number; tracking: string }) {
  return (
    <div>
      <div className={`-ml-px text-[14.4px] leading-[22px] font-medium text-[#1f272b] ${tracking}`}>{label}</div>
      <div className="relative mt-3 h-2 rounded bg-[#dee2e6]">
        <div className="absolute -top-1 size-4 -translate-x-1/2 rounded-full bg-[#0b344e]" style={{ left: `${percent}%` }} />
      </div>
      <div className="mt-[15px] -ml-px text-[11.5px] leading-[17px] text-[#5f6b73]">{value}</div>
    </div>
  );
}

function Modal() {
  return (
    <div className="absolute top-[29px] left-[392px] z-20 flex h-[935px] w-[1138px] flex-col rounded-[4px] bg-white shadow-[0_0_0_1px_rgba(60,68,70,0.45)]">
      <div className="flex h-[71px] items-start justify-between pr-[18px] pl-[15px]">
        <h3 className="pt-[16px] text-[18px] leading-[27px] font-semibold tracking-[0.5px] text-[#1c2428]">Change existing block</h3>
        <svg viewBox="0 0 10 10" className="mt-[21px] size-2.5" stroke="#848d91" strokeWidth="2.2">
          <path d="M1 1l8 8M9 1l-8 8" />
        </svg>
      </div>
      <div className="flex h-10 border-b border-[#dee2e6] pl-[26px] text-[14.4px] text-[#0b344e]">
        <div className="flex w-[74px] items-center pb-0.5 tracking-[0.5px]">General</div>
        <div className="-mb-px flex h-10 w-[106px] items-center justify-center rounded-t border border-b-0 border-[#dee2e6] bg-[#f9fafa] pb-[3px] tracking-[0.5px] text-[#495057]">
          Geometry
        </div>
        <div className="flex items-center pb-0.5 pl-[17px] tracking-[0.3px]">Configure Sources</div>
        <FaLanguage className="mt-[9px] ml-8 size-[18px]" />
      </div>

      <div className="flex-1 px-5 pt-7">
        <div className="relative h-[486px] w-[1098px] overflow-hidden">
          <GeoMap />
          <div className="absolute top-2.5 left-2.5 flex w-[34px] flex-col rounded border-2 border-[#88a9b2] bg-white text-black">
            <div className="flex h-[30px] items-center justify-center border-b border-[#cccccc] pt-[3px]">
              <svg viewBox="0 0 12 12" className="size-3" stroke="#000" strokeWidth="2">
                <path d="M6 0v12M0 6h12" />
              </svg>
            </div>
            <div className="flex h-[30px] items-center justify-center pt-[3px]">
              <svg viewBox="0 0 12 12" className="size-3" stroke="#000" strokeWidth="2">
                <path d="M0 6h12" />
              </svg>
            </div>
          </div>
          <div className="absolute top-[11px] right-[11px] flex size-[33px] items-center justify-center rounded border-2 border-black/20 bg-white bg-clip-padding pb-px text-[#0b344e]">
            <FaLocationArrow className="size-3" />
          </div>
          <div className="absolute right-0 bottom-0 h-[17px] bg-white/75 px-[5px] text-[11px] leading-[17px] tracking-[0.04px] text-[#333333] [font-family:'Liberation_Sans',sans-serif]">
            <span className="text-[#0078a8]">Leaflet</span> | © <span className="text-[#0078a8]">OpenStreetMap</span>
          </div>
        </div>
        <p className="mt-1 -ml-px text-[11.5px] leading-[17px] tracking-[0.32px] whitespace-nowrap text-[#5f6b73]">
          Move and scroll the map to the position that will be used as a default. You can also lock the position or zoom to
          prevent users from moving too far.
        </p>
        <div className="mt-4 border-t border-[#e7e9eb]" />
        <div className="mt-[23px] grid grid-cols-3 gap-x-[30px]">
          <div>
            <div className="-ml-px text-[14.4px] leading-[22px] font-medium tracking-[0.38px] text-[#1f272b]">Zoom Starting</div>
            <div className="mt-2 flex h-[38px] items-center rounded border-2 border-[#e4e9ef] bg-[#f9fafa] pl-3 text-[14.4px] text-[#495057]">
              5
            </div>
          </div>
          <Slider label="Zoom min" value="4" percent={19.1} tracking="tracking-[0.59px]" />
          <Slider label="Zoom max" value="15" percent={80.7} tracking="tracking-[0.55px]" />
        </div>
        <div className="mt-[15px] -ml-px text-[14.4px] leading-[22px] font-medium tracking-[0.2px] text-[#1f272b]">Lock bounds</div>
        <div className="mt-3 flex h-5 w-[35px] items-center rounded-full border-2 border-[#adb5bd] pl-0.5">
          <div className="size-3 rounded-full bg-[#adb5bd]" />
        </div>
      </div>

      <div className="flex h-[63px] items-center border-t border-[#dee2e6] px-4 text-[14.4px] font-semibold">
        <div className="flex h-[30px] w-[119px] items-center justify-center rounded-[3px] bg-[#e84020] pb-px tracking-[0.13px] text-white">
          Delete Block
        </div>
        <div className="ml-auto pb-px font-medium tracking-[0.48px] text-[#0b344e]">Cancel</div>
        <div className="ml-4 flex h-[30px] w-[141px] items-center justify-center rounded-[3px] bg-[#0b344e] pb-px tracking-[0.37px] text-white">
          Save and close
        </div>
      </div>
    </div>
  );
}

export default function App() {
  return (
    <div className="relative flex h-[1080px] w-[1920px] overflow-hidden bg-[#919798] [font-family:Inter,sans-serif]">
      <Sidebar />
      <main className="flex flex-1 flex-col">
        <TopBar />
        <div className="flex-1">
          <Canvas />
        </div>
        <BottomBar />
      </main>
      <Modal />
    </div>
  );
}
